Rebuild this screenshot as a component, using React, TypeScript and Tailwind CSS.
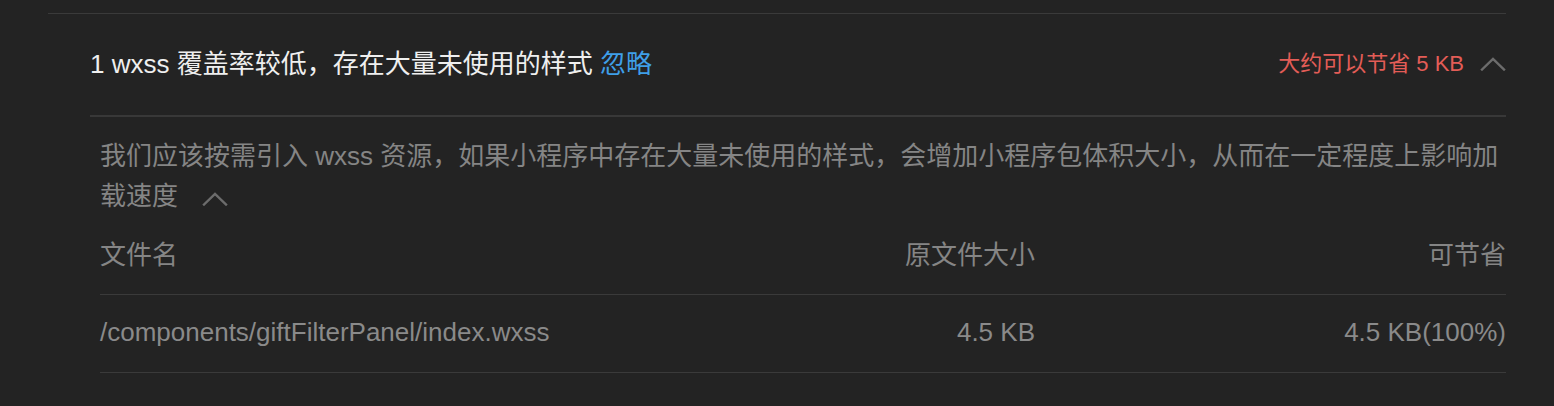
import type { ReactNode } from 'react'

const rows = [
  { file: '/components/giftFilterPanel/index.wxss', size: '4.5 KB', saving: '4.5 KB(100%)' },
]

function ChevronUp({ className }: { className?: string }) {
  return (
    <svg viewBox="0 0 26 14" className={className} fill="none" stroke="currentColor" strokeWidth="2.4" strokeLinecap="square">
      <path d="M2 12.5 L13 2 L24 12.5" />
    </svg>
  )
}

function Cell({ children, right }: { children: ReactNode; right?: boolean }) {
  return <div className={right ? 'text-right' : ''}>{children}</div>
}

export default function App() {
  return (
    <div
      className="min-h-[406px] bg-[#232323] px-12 pt-[13px]"
      style={{ fontFamily: '"Liberation Sans", "Noto Sans CJK SC", sans-serif' }}
    >
      <div className="border-t border-[#3a3a3a]">
        <div className="ml-[42px]">
          {/* audit item header */}
          <div className="flex h-[103px] items-center justify-between border-b-2 border-[#383838] pb-[2px] text-[26px] leading-[40px]">
            <div className="text-[#efefef]">
              1 wxss 覆盖率较低，存在大量未使用的样式 <span className="text-[#3f9fe8]">忽略</span>
            </div>
            <div className="flex items-center gap-4">
              <span className="text-[22px] text-[#e35d57]">大约可以节省 5 KB</span>
              <ChevronUp className="h-[14px] w-[26px] text-[#6c6c6c]" />
            </div>
          </div>

          <div className="pl-[10px] pt-[19px] text-[26px] leading-[40px] text-[#858585]">
            <p>
              我们应该按需引入 wxss 资源，如果小程序中存在大量未使用的样式，会增加小程序包体积大小，从而在一定程度上影响加载速度
              <ChevronUp className="ml-6 inline-block h-[14px] w-[26px] align-[-1px] text-[#6c6c6c]" />
            </p>

            <div className="grid h-[79px] grid-cols-[1fr_300px_471px] items-center border-b border-[#3a3a3a]">
              <Cell>文件名</Cell>
              <Cell right>原文件大小</Cell>
              <Cell right>可节省</Cell>
            </div>
            {rows.map((r) => (
              <div
                key={r.file}
                className="grid h-[78px] grid-cols-[1fr_300px_471px] items-center border-b border-[#3a3a3a] pb-[3px] text-[#8a8a8a]"
              >
                <Cell>{r.file}</Cell>
                <Cell right>{r.size}</Cell>
                <Cell right>{r.saving}</Cell>
              </div>
            ))}
          </div>
        </div>
      </div>
    </div>
  )
}
